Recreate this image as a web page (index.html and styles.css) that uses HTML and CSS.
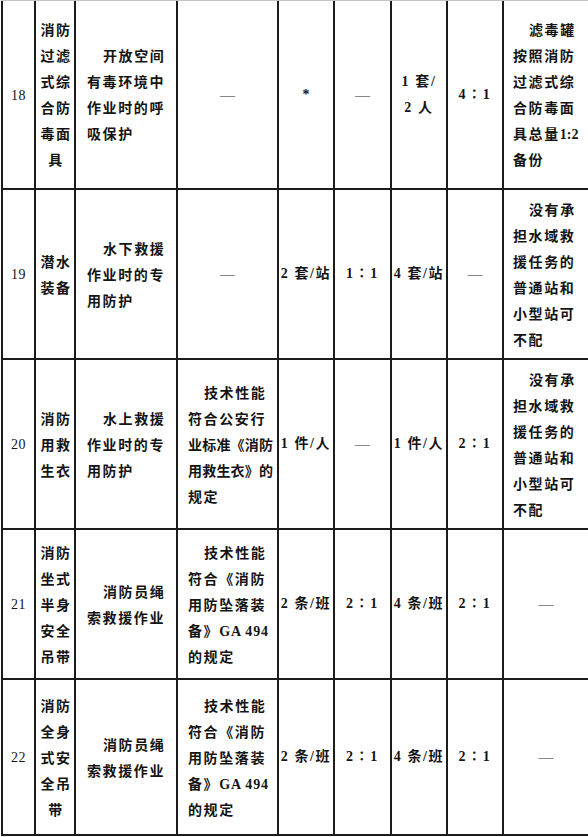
FILE: index.html
```html
<!DOCTYPE html>
<html lang="zh-CN">
<head>
<meta charset="utf-8">
<title>消防员个人防护装备配备表</title>
<link rel="stylesheet" href="styles.css">
</head>
<body>
<div class="sheet">
  <!-- 18 -->
  <div class="c ctr no">18</div>
  <div class="c ctr name"><p>消防<br>过滤<br>式综<br>合防<br>毒面<br>具</p></div>
  <div class="c txt use"><p>开放空间<br>有毒环境中<br>作业时的呼<br>吸保护</p></div>
  <div class="c ctr"><span class="dash">—</span></div>
  <div class="c ctr"><span class="star">*</span></div>
  <div class="c ctr"><span class="dash">—</span></div>
  <div class="c ctr"><p>1 套/<br>2 人</p></div>
  <div class="c ctr">4∶1</div>
  <div class="c txt note"><p>滤毒罐<br>按照消防<br>过滤式综<br>合防毒面<br>具总量<span class="ratio">1:2</span><br>备份</p></div>

  <!-- 19 -->
  <div class="c ctr no">19</div>
  <div class="c ctr name"><p>潜水<br>装备</p></div>
  <div class="c txt use"><p>水下救援<br>作业时的专<br>用防护</p></div>
  <div class="c ctr"><span class="dash">—</span></div>
  <div class="c ctr">2 套/站</div>
  <div class="c ctr">1∶1</div>
  <div class="c ctr">4 套/站</div>
  <div class="c ctr"><span class="dash">—</span></div>
  <div class="c txt note"><p>没有承<br>担水域救<br>援任务的<br>普通站和<br>小型站可<br>不配</p></div>

  <!-- 20 -->
  <div class="c ctr no">20</div>
  <div class="c ctr name"><p>消防<br>用救<br>生衣</p></div>
  <div class="c txt use"><p>水上救援<br>作业时的专<br>用防护</p></div>
  <div class="c txt spec"><p>技术性能<br>符合公安行<br><span class="tight">业标准《消防</span><br><span class="tight">用救生衣》的</span><br>规定</p></div>
  <div class="c ctr">1 件/人</div>
  <div class="c ctr"><span class="dash">—</span></div>
  <div class="c ctr">1 件/人</div>
  <div class="c ctr">2∶1</div>
  <div class="c txt note"><p>没有承<br>担水域救<br>援任务的<br>普通站和<br>小型站可<br>不配</p></div>

  <!-- 21 -->
  <div class="c ctr no">21</div>
  <div class="c ctr name"><p>消防<br>坐式<br>半身<br>安全<br>吊带</p></div>
  <div class="c txt use"><p>消防员绳<br>索救援作业</p></div>
  <div class="c txt spec"><p>技术性能<br>符合《消防<br>用防坠落装<br>备》<span class="latin">GA 494</span><br>的规定</p></div>
  <div class="c ctr">2 条/班</div>
  <div class="c ctr">2∶1</div>
  <div class="c ctr">4 条/班</div>
  <div class="c ctr">2∶1</div>
  <div class="c ctr"><span class="dash">—</span></div>

  <!-- 22 -->
  <div class="c ctr no">22</div>
  <div class="c ctr name"><p>消防<br>全身<br>式安<br>全吊<br>带</p></div>
  <div class="c txt use"><p>消防员绳<br>索救援作业</p></div>
  <div class="c txt spec"><p>技术性能<br>符合《消防<br>用防坠落装<br>备》<span class="latin">GA 494</span><br>的规定</p></div>
  <div class="c ctr">2 条/班</div>
  <div class="c ctr">2∶1</div>
  <div class="c ctr">4 条/班</div>
  <div class="c ctr">2∶1</div>
  <div class="c ctr"><span class="dash">—</span></div>
</div>
</body>
</html>
```

FILE: styles.css
```css
html, body {
  margin: 0;
  padding: 0;
  background: #ffffff;
}

body {
  font-family: "Liberation Serif", "Noto Sans CJK SC", serif;
  font-size: 14px;
  font-weight: 700;
  color: #141414;
}

.sheet {
  display: grid;
  grid-template-columns: 31px 38px 100px 99px 54px 55px 54px 54px 84px;
  grid-template-rows: 187px 168px 168px 148px 154px;
  gap: 2px;
  width: max-content;
  margin-left: 1px;
  padding: 0 0 2px 2px;
  background: #1c1c1c;
  border-top: 1px solid #c4c4c4;
}

.c {
  background: #ffffff;
  display: flex;
  align-items: center;
  line-height: 26px;
  letter-spacing: 1.6px;
  white-space: nowrap;
}

.c p {
  margin: 0;
}

.ctr {
  justify-content: center;
  text-align: center;
}

.no {
  font-weight: 400;
  letter-spacing: 0.5px;
  padding-top: 2px;
}

.name {
  padding-left: 2px;
  padding-top: 3px;
}

.txt {
  justify-content: flex-start;
  text-align: left;
  padding-top: 3px;
}

.txt p {
  text-indent: 16px;
}

.use {
  padding-left: 11px;
}

.spec {
  padding-left: 10px;
}

.note {
  padding-left: 9px;
}

.tight {
  letter-spacing: 0.2px;
}

.ratio {
  letter-spacing: 0;
}

.latin {
  letter-spacing: 0.8px;
}

.dash {
  font-weight: 400;
  color: #2a2a2a;
  letter-spacing: 0;
  font-size: 15px;
}

.star {
  font-size: 14px;
  letter-spacing: 0;
}
```
